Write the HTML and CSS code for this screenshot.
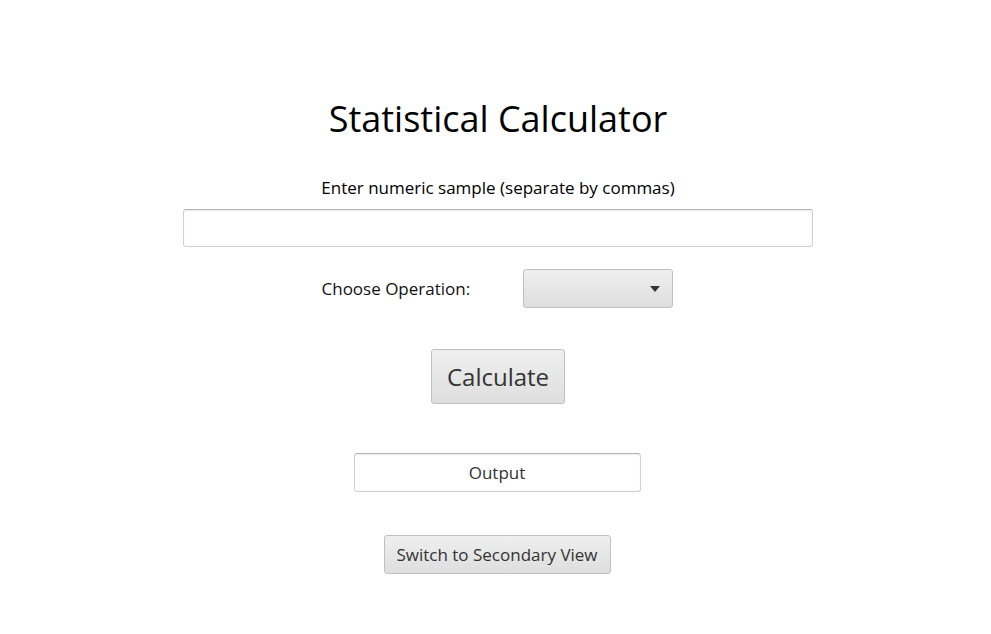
FILE: index.html
```html
<!DOCTYPE html>
<html lang="en">
<head>
<meta charset="utf-8">
<title>Statistical Calculator</title>
<link rel="stylesheet" href="styles.css">
</head>
<body>
<main class="app">
  <h1 class="title">Statistical Calculator</h1>
  <label class="prompt" for="sample">Enter numeric sample (separate by commas)</label>
  <input class="field sample" id="sample" type="text">
  <div class="op-row">
    <span class="op-label">Choose Operation:</span>
    <div class="combo">
      <svg class="arrow" width="10" height="6" viewBox="0 0 10 6"><path d="M0 0H10L5 6Z" fill="#333"/></svg>
    </div>
  </div>
  <button class="btn calc">Calculate</button>
  <div class="field output">Output</div>
  <button class="btn switch">Switch to Secondary View</button>
</main>
</body>
</html>
```
FILE: styles.css
```css
html, body {
  margin: 0;
  padding: 0;
  background: #ffffff;
}
.app {
  display: flex;
  flex-direction: column;
  align-items: center;
  font-family: "Open Sans", "Noto Sans", sans-serif;
  color: #000;
  padding-top: 93px;
  width: 991px;
  box-sizing: border-box;
  padding-left: 5px;
}
.title {
  margin: 0;
  font-weight: 400;
  font-size: 36px;
  line-height: 52px;
}
.prompt {
  margin-top: 32px;
  font-size: 17px;
  line-height: 22px;
}
.field {
  box-sizing: border-box;
  background: #fff;
  border: 1px solid #d0d0d0;
  border-top-color: #b4b4b4;
  border-radius: 3px;
  box-shadow: inset 0 1px 1px rgba(0,0,0,0.08);
}
.sample {
  margin-top: 10px;
  width: 630px;
  height: 38px;
  outline: none;
}
.op-row {
  margin-top: 22px;
  margin-right: 2px;
  display: flex;
  align-items: center;
  width: 351px;
  justify-content: space-between;
  height: 39px;
}
.op-label {
  font-size: 17px;
  line-height: 22px;
  color: #111;
}
.combo {
  box-sizing: border-box;
  width: 150px;
  height: 39px;
  border: 1px solid #c0c0c0;
  border-radius: 3px;
  background: linear-gradient(#efefef, #dedede);
  position: relative;
}
.arrow {
  position: absolute;
  right: 12px;
  top: 16px;
}
.btn {
  box-sizing: border-box;
  border: 1px solid #c0c0c0;
  border-radius: 3px;
  background: linear-gradient(#efefef, #dedede);
  color: #333;
  font-family: "Open Sans", "Noto Sans", sans-serif;
  padding: 0;
  cursor: pointer;
}
.calc {
  margin-top: 41px;
  width: 134px;
  height: 55px;
  font-size: 24px;
}
.output {
  margin-top: 49px;
  margin-right: 2px;
  width: 287px;
  height: 39px;
  display: flex;
  align-items: center;
  justify-content: center;
  font-size: 17px;
  color: #333;
}
.switch {
  margin-top: 43px;
  margin-right: 2px;
  width: 227px;
  height: 39px;
  font-size: 17px;
}
```
